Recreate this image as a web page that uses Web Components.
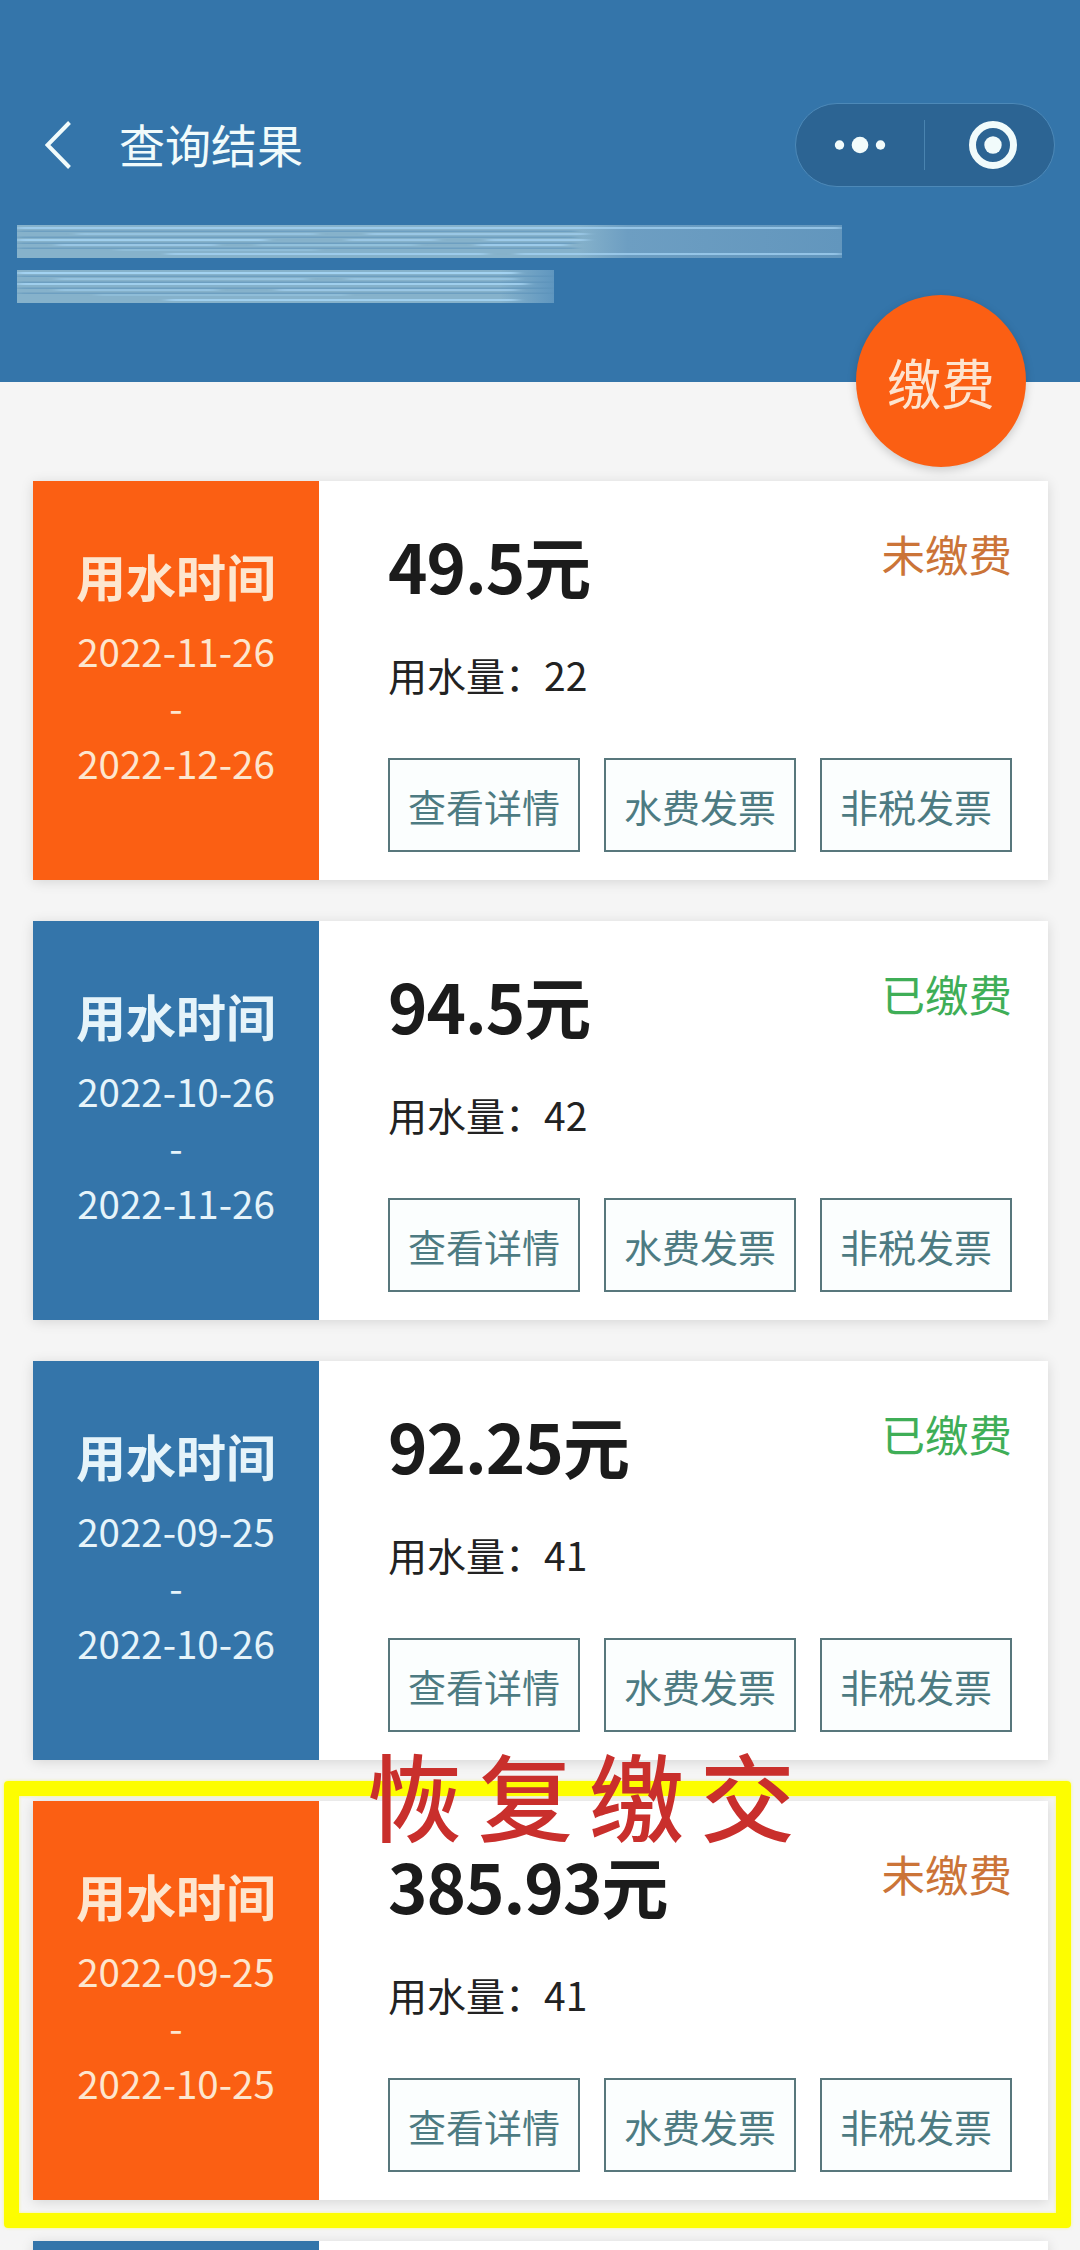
<!DOCTYPE html>
<html lang="zh">
<head>
<meta charset="utf-8">
<title>查询结果</title>
<style>
  html, body { margin: 0; background: #f5f5f5; }
  body { font-family: "Noto Sans CJK SC", "Noto Sans", sans-serif; }
</style>
</head>
<body>
<result-page>
  <result-header slot="header">查询结果</result-header>
  <bill-card tone="due">
    <span slot="from">2022-11-26</span><span slot="to">2022-12-26</span>
    <span slot="amount">49.5元</span><span slot="usage">22</span>
    <span slot="status">未缴费</span>
  </bill-card>
  <bill-card tone="paid">
    <span slot="from">2022-10-26</span><span slot="to">2022-11-26</span>
    <span slot="amount">94.5元</span><span slot="usage">42</span>
    <span slot="status">已缴费</span>
  </bill-card>
  <bill-card tone="paid">
    <span slot="from">2022-09-25</span><span slot="to">2022-10-26</span>
    <span slot="amount">92.25元</span><span slot="usage">41</span>
    <span slot="status">已缴费</span>
  </bill-card>
  <marked-item note="恢复缴交">
    <bill-card tone="due">
      <span slot="from">2022-09-25</span><span slot="to">2022-10-25</span>
      <span slot="amount">385.93元</span><span slot="usage">41</span>
      <span slot="status">未缴费</span>
    </bill-card>
  </marked-item>
  <bill-stub></bill-stub>
</result-page>

<script>
  class ResultPage extends HTMLElement {
    constructor() {
      super();
      this.attachShadow({mode: 'open'}).innerHTML = `
        <style>
          :host { display: block; height: 2250px; overflow: hidden; background: #f5f5f5; }
          .list { display: flex; flex-direction: column; gap: 41px; padding: 99px 32px 0 33px; }
        </style>
        <slot name="header"></slot>
        <div class="list"><slot></slot></div>`;
    }
  }

  // smeared-out address lines: [y, x1, x2, opacity] for each streak
  const STREAKS = {
    one: [[3,0,825,.7],[9,60,300,.5],[9,350,570,.6],[15,0,250,.8],[15,330,420,.6],[15,470,570,.7],[20,40,200,.6],[20,240,400,.4],[20,460,550,.7],[25,100,300,.3],[29,150,470,.7],[29,500,825,.7]],
    two: [[3,0,500,.9],[9,40,290,.5],[9,330,500,.5],[14,0,510,.8],[20,40,200,.5],[20,260,500,.6],[25,80,330,.3],[30,150,500,.8]]
  };

  class BlurStrip extends HTMLElement {
    constructor() {
      super();
      const kind = this.getAttribute('kind');
      const width = kind === 'one' ? 825 : 537;
      const lines = STREAKS[kind].map(([y, a, b, o]) =>
        `<rect x="${a}" y="${y - 1}" width="${b - a}" height="2" fill="#a6d6f6" opacity="${o}"/>`).join('');
      const gaps = [6, 12, 18, 23].map(y =>
        `<rect x="0" y="${y - .5}" width="${kind === 'one' ? 560 : width}" height="1.500" fill="#5a90b8" opacity=".55"/>`).join('');
      this.attachShadow({mode: 'open'}).innerHTML = `
        <style>
          :host { display: block; width: ${width}px; height: 33px; }
          svg { display: block; }
        </style>
        <svg width="${width}" height="33" viewBox="0 0 ${width} 33">
          <defs>
            <linearGradient id="base-${kind}">
              <stop offset="0" stop-color="#86b2cb"/>
              <stop offset="${kind === 'one' ? .68 : .9}" stop-color="#86b2cb"/>
              <stop offset="${kind === 'one' ? .74 : 1}" stop-color="${kind === 'one' ? '#6d9ec2' : '#5f96bf'}"/>
              <stop offset="1" stop-color="${kind === 'one' ? '#6296bd' : '#4c88b6'}"/>
            </linearGradient>
            <filter id="smear-${kind}" x="-2%" y="-10%" width="104%" height="120%"><feGaussianBlur stdDeviation="5 .5"/></filter>
          </defs>
          <rect width="${width}" height="33" fill="url(#base-${kind})"/>
          <g filter="url(#smear-${kind})">${gaps}${lines}</g>
        </svg>`;
    }
  }

  class ResultHeader extends HTMLElement {
    constructor() {
      super();
      this.attachShadow({mode: 'open'}).innerHTML = `
        <style>
          :host { display: block; position: relative; height: 382px; box-sizing: border-box; padding-top: 103px; background: #3475aa; color: #f1fbfb; }
          .nav { display: flex; align-items: center; height: 84px; padding: 0 25px 0 45px; }
          .back { display: block; width: 26px; height: 48px; margin-right: 48px; }
          .title { flex: 1; font-size: 46px; line-height: 80px; height: 84px; }
          .capsule { display: flex; align-items: center; width: 260px; height: 84px; box-sizing: border-box; border: 1px solid #4d89b8; border-radius: 42px; background: #2c6493; }
          .capsule > div { display: flex; align-items: center; justify-content: center; height: 50px; box-sizing: border-box; }
          .more { flex: 0 0 128px; }
          .capsule .home { flex: 1; border-left: 1px solid #4a84b0; padding-left: 6px; }
          .blur { display: flex; flex-direction: column; gap: 12px; margin: 38px 0 0 17px; }
          .pay { position: absolute; left: 856px; top: 295px; width: 170px; height: 172px; border-radius: 50%; display: flex; align-items: center; justify-content: center; background: #fb5f13; color: #fde4cf; font-size: 54px; box-shadow: 0 3px 10px rgba(0,0,0,.18); z-index: 1; }
        </style>
        <div class="nav">
          <svg class="back" viewBox="0 0 26 48" fill="none" stroke="currentColor" stroke-width="4"><path d="M24.500 1.500 L2.500 24 L24.500 46.500"/></svg>
          <div class="title"><slot></slot></div>
          <div class="capsule">
            <div class="more">
              <svg width="52" height="20" viewBox="0 0 52 20" fill="currentColor"><circle cx="5.500" cy="10" r="4.700"/><circle cx="26" cy="10" r="8.300"/><circle cx="46.500" cy="10" r="4.700"/></svg>
            </div>
            <div class="home">
              <svg width="50" height="50" viewBox="0 0 50 50"><circle cx="25" cy="25" r="20.500" fill="none" stroke="currentColor" stroke-width="7"/><circle cx="25" cy="25" r="8.700" fill="currentColor"/></svg>
            </div>
          </div>
        </div>
        <div class="blur"><blur-strip kind="one"></blur-strip><blur-strip kind="two"></blur-strip></div>
        <div class="pay">缴费</div>`;
    }
  }

  const cardTemplate = document.createElement('template');
  cardTemplate.innerHTML = `
    <style>
      :host { display: flex; height: 399px; background: #fff; box-shadow: 0 2px 12px rgba(0,0,0,.13); }
      .when { width: 286px; flex: none; box-sizing: border-box; padding-top: 63px; text-align: center; background: var(--tone); color: #fde6cf; }
      :host([tone=paid]) .when { color: #e6f4fa; }
      .label { font-size: 50px; font-weight: 700; line-height: 62px; margin-bottom: 16px; }
      .date { font-size: 38.500px; line-height: 56px; }
      .main { flex: 1; box-sizing: border-box; padding: 0 36px 28px 69px; display: flex; flex-direction: column; }
      .top { display: flex; justify-content: space-between; align-items: flex-start; height: 147px; padding-top: 39px; box-sizing: border-box; }
      .amount { font-size: 67px; font-weight: 700; line-height: 90px; color: #1b1b1b; letter-spacing: -1px; }
      .status { font-size: 43.500px; line-height: 62px; margin-top: 3px; color: var(--status); }
      .usage { font-size: 39px; line-height: 60px; margin-top: 16px; color: #222; }
      .actions { display: flex; justify-content: space-between; margin-top: auto; }
    </style>
    <div class="when">
      <div class="label">用水时间</div>
      <div class="date"><slot name="from"></slot></div>
      <div class="date">-</div>
      <div class="date"><slot name="to"></slot></div>
    </div>
    <div class="main">
      <div class="top">
        <div class="amount"><slot name="amount"></slot></div>
        <div class="status"><slot name="status"></slot></div>
      </div>
      <div class="usage">用水量：<slot name="usage"></slot></div>
      <div class="actions">
        <bill-action>查看详情</bill-action>
        <bill-action>水费发票</bill-action>
        <bill-action>非税发票</bill-action>
      </div>
    </div>`;

  class BillCard extends HTMLElement {
    constructor() {
      super();
      this.attachShadow({mode: 'open'}).appendChild(cardTemplate.content.cloneNode(true));
    }
    connectedCallback() {
      const due = this.getAttribute('tone') === 'due';
      this.style.setProperty('--tone', due ? '#fb5f13' : '#3475aa');
      this.style.setProperty('--status', due ? '#cb7438' : '#3fae57');
    }
  }

  class BillAction extends HTMLElement {
    constructor() {
      super();
      this.attachShadow({mode: 'open'}).innerHTML = `
        <style>
          :host { display: flex; align-items: center; justify-content: center; width: 192px; height: 94px; box-sizing: border-box; border: 2px solid #58777c; background: #fbfefe; color: #4d7b82; font-size: 38px; }
        </style>
        <slot></slot>`;
    }
  }

  class MarkedItem extends HTMLElement {
    constructor() {
      super();
      this.attachShadow({mode: 'open'}).innerHTML = `
        <style>
          :host { display: block; position: relative; }
          .frame { position: absolute; left: -29px; right: -23px; top: -20px; bottom: -28px; border: 15px solid #fdfd00; border-radius: 4px; box-shadow: 0 0 3px rgba(253,253,0,.5), inset 0 0 3px rgba(253,253,0,.5); pointer-events: none; }
          .note { position: absolute; left: 334px; top: -52px; font-size: 95px; font-weight: 500; line-height: 90px; letter-spacing: 16px; white-space: nowrap; color: #c92f2c; }
        </style>
        <slot></slot>
        <div class="frame"></div>
        <div class="note">${this.getAttribute('note')}</div>`;
    }
  }

  class BillStub extends HTMLElement {
    constructor() {
      super();
      this.attachShadow({mode: 'open'}).innerHTML = `
        <style>
          :host { display: flex; height: 399px; background: #fff; box-shadow: 0 2px 12px rgba(0,0,0,.13); }
          div { width: 286px; background: #3475aa; }
        </style>
        <div></div>`;
    }
  }

  customElements.define('blur-strip', BlurStrip);
  customElements.define('bill-action', BillAction);
  customElements.define('bill-card', BillCard);
  customElements.define('bill-stub', BillStub);
  customElements.define('marked-item', MarkedItem);
  customElements.define('result-header', ResultHeader);
  customElements.define('result-page', ResultPage);
</script>
</body>
</html>
